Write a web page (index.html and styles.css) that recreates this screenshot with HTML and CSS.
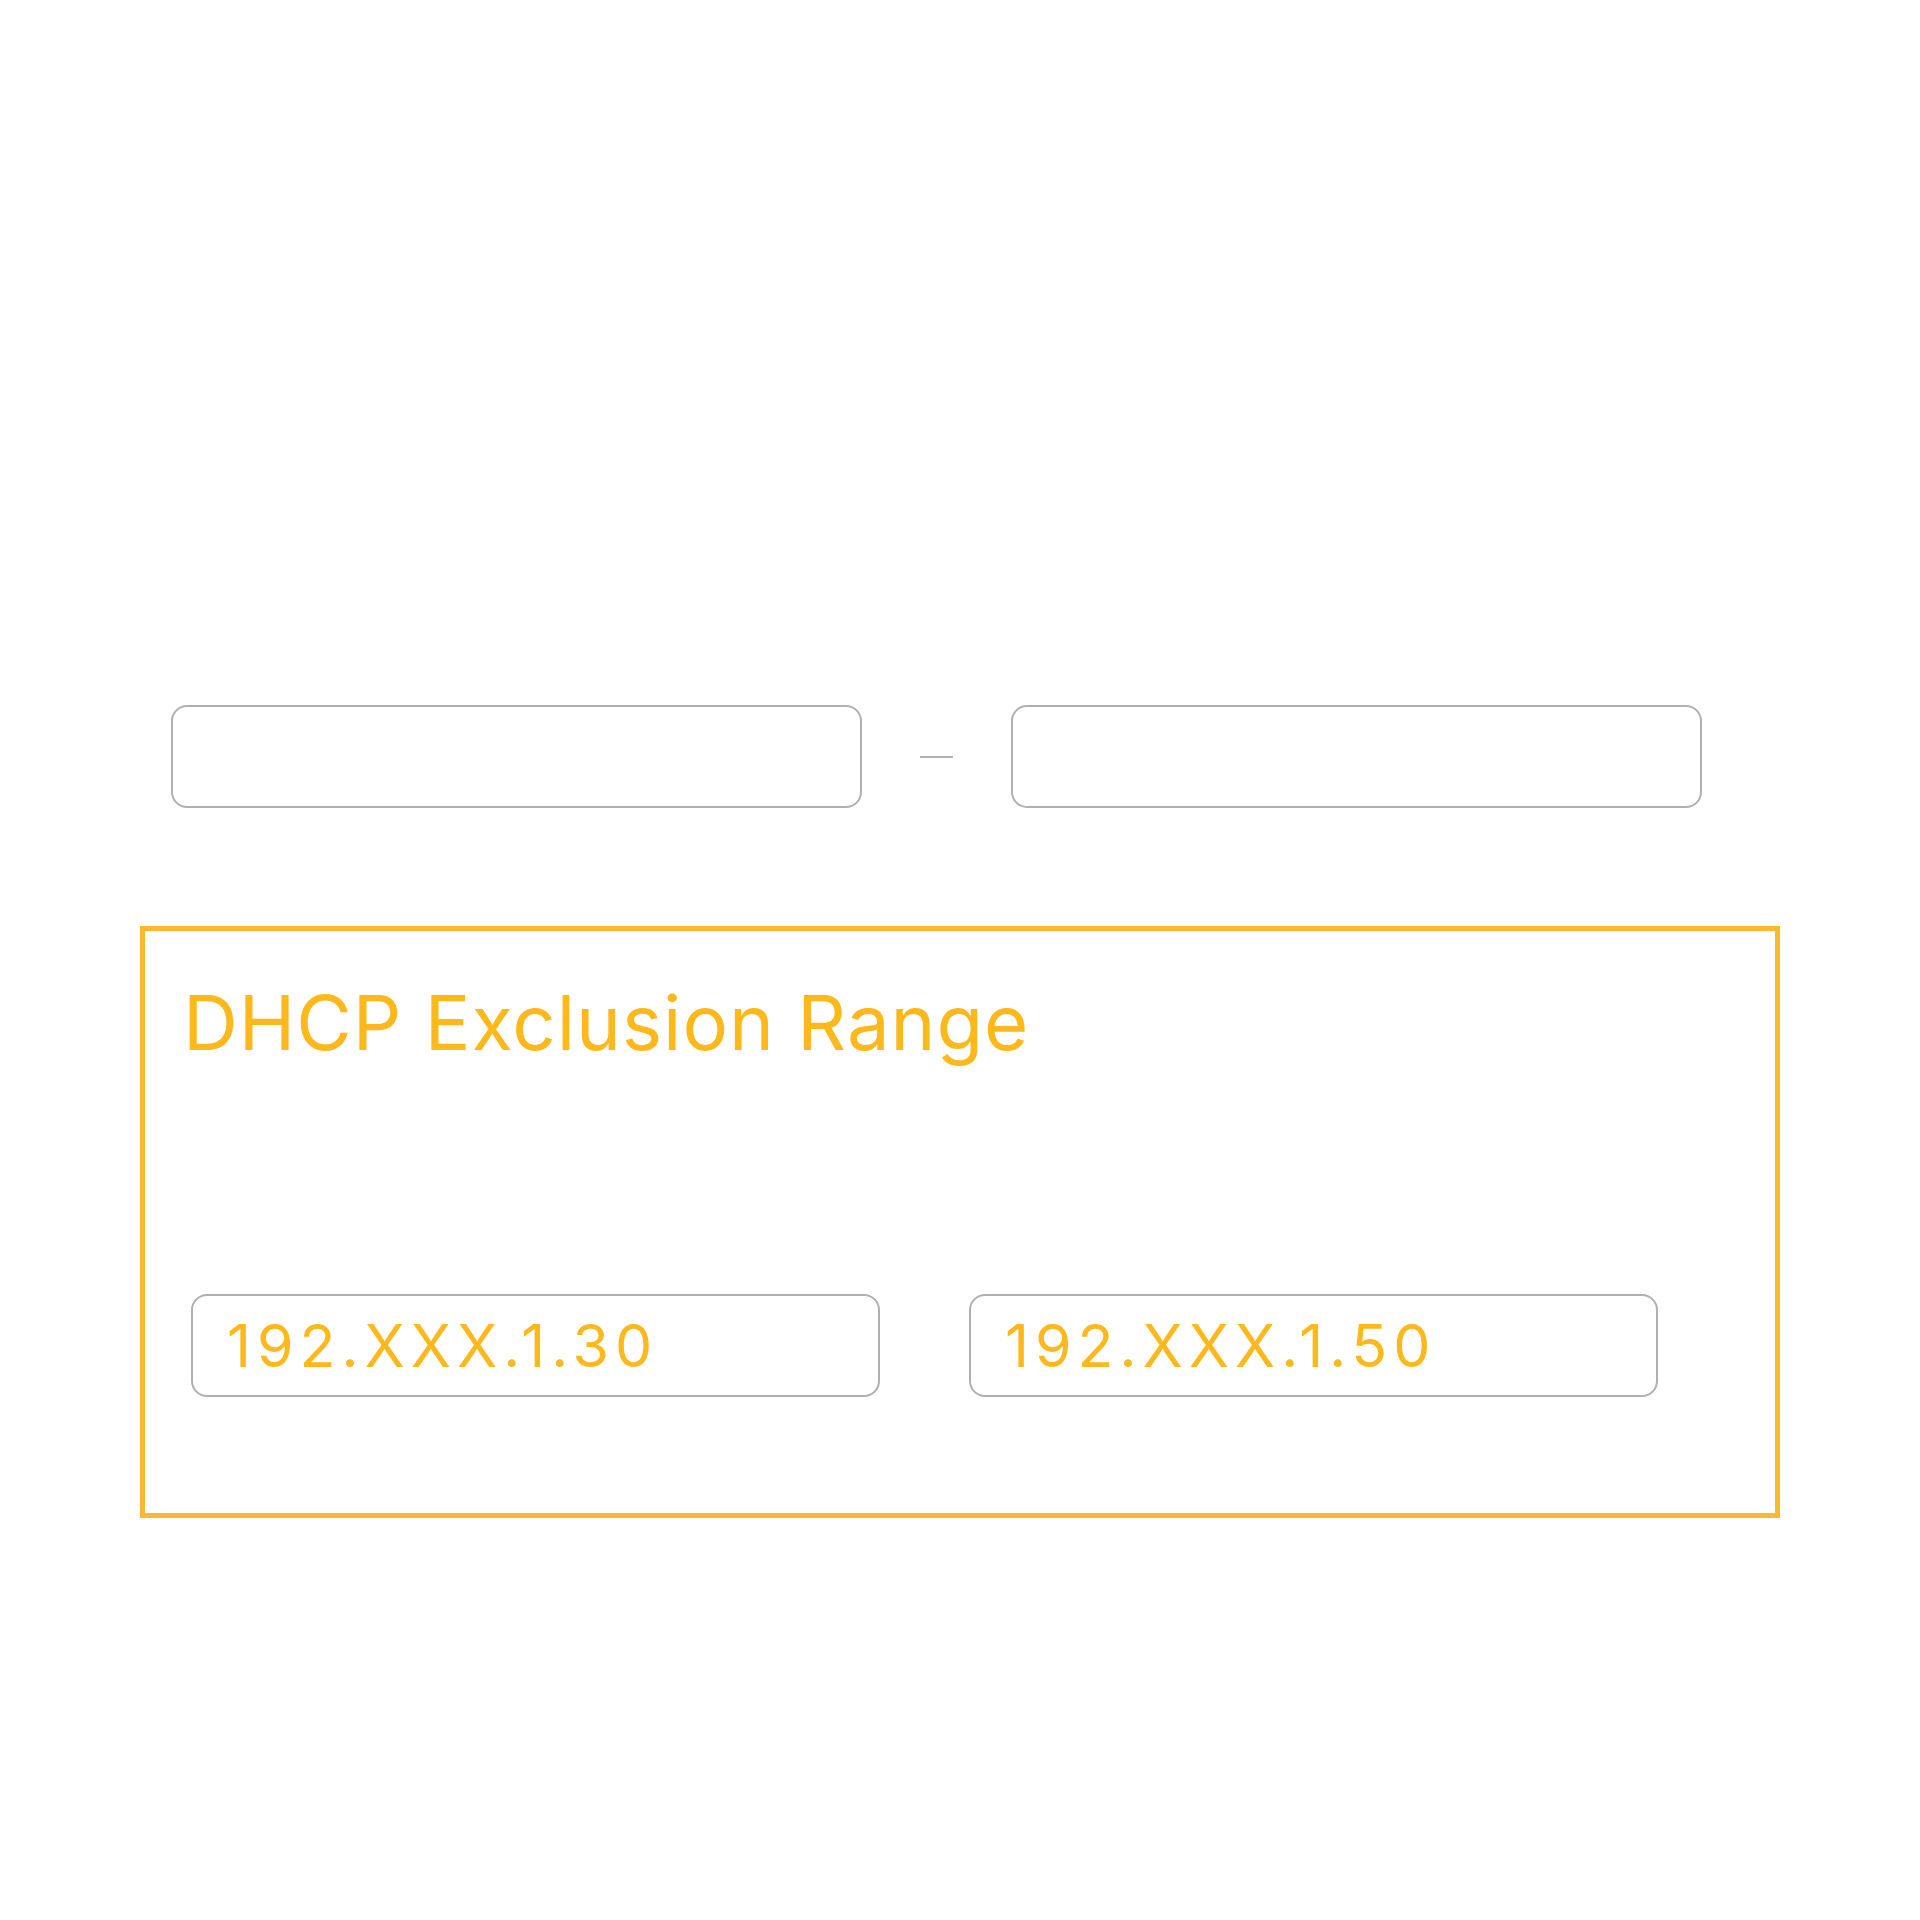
FILE: index.html
```html
<!DOCTYPE html>
<html lang="en">
<head>
<meta charset="UTF-8" />
<title>DHCP Exclusion Range</title>
<link rel="stylesheet" href="styles.css">
</head>
<body>

<div class="page">
    <div class="range-row">
        <div class="field"></div>
        <span class="dash"></span>
        <div class="field"></div>
    </div>

    <div class="exclusion">
        <h2>DHCP Exclusion Range</h2>
        <div class="exclusion-row">
            <div class="field ip">192.XXX.1.30</div>
            <div class="field ip">192.XXX.1.50</div>
        </div>
    </div>
</div>

</body>
</html>
```

FILE: styles.css
```css
body {
  margin: 0;
  background-color: #ffffff;
  font-family: 'Inter', sans-serif;
}
.page {
  padding-top: 705px;
  height: 1215px;
}
.range-row {
  display: flex;
  align-items: center;
  margin-left: 171px;
}
.field {
  width: 691px;
  height: 103px;
  box-sizing: border-box;
  border: 2px solid #b0b0b0;
  border-radius: 16px;
  background-color: #fff;
}
.dash {
  width: 33px;
  height: 2px;
  background-color: #b0b0b0;
  margin: 0 58px;
}
.exclusion {
  margin: 118px 0 0 140px;
  width: 1640px;
  height: 592px;
  box-sizing: border-box;
  border: 5px solid #fbb92e;
  padding: 53px 0 0 46px;
}
.exclusion h2 {
  margin: 0 0 0 -8px;
  font-size: 76px;
  line-height: 1;
  font-weight: 400;
  letter-spacing: 1px;
  color: #fdb81c;
}
.exclusion-row {
  display: flex;
  gap: 89px;
  margin-top: 234px;
}
.field.ip {
  width: 689px;
  display: flex;
  align-items: center;
  padding-left: 34px;
  font-size: 59px;
  font-weight: 400;
  letter-spacing: 6px;
  color: #fdb81c;
}
```
